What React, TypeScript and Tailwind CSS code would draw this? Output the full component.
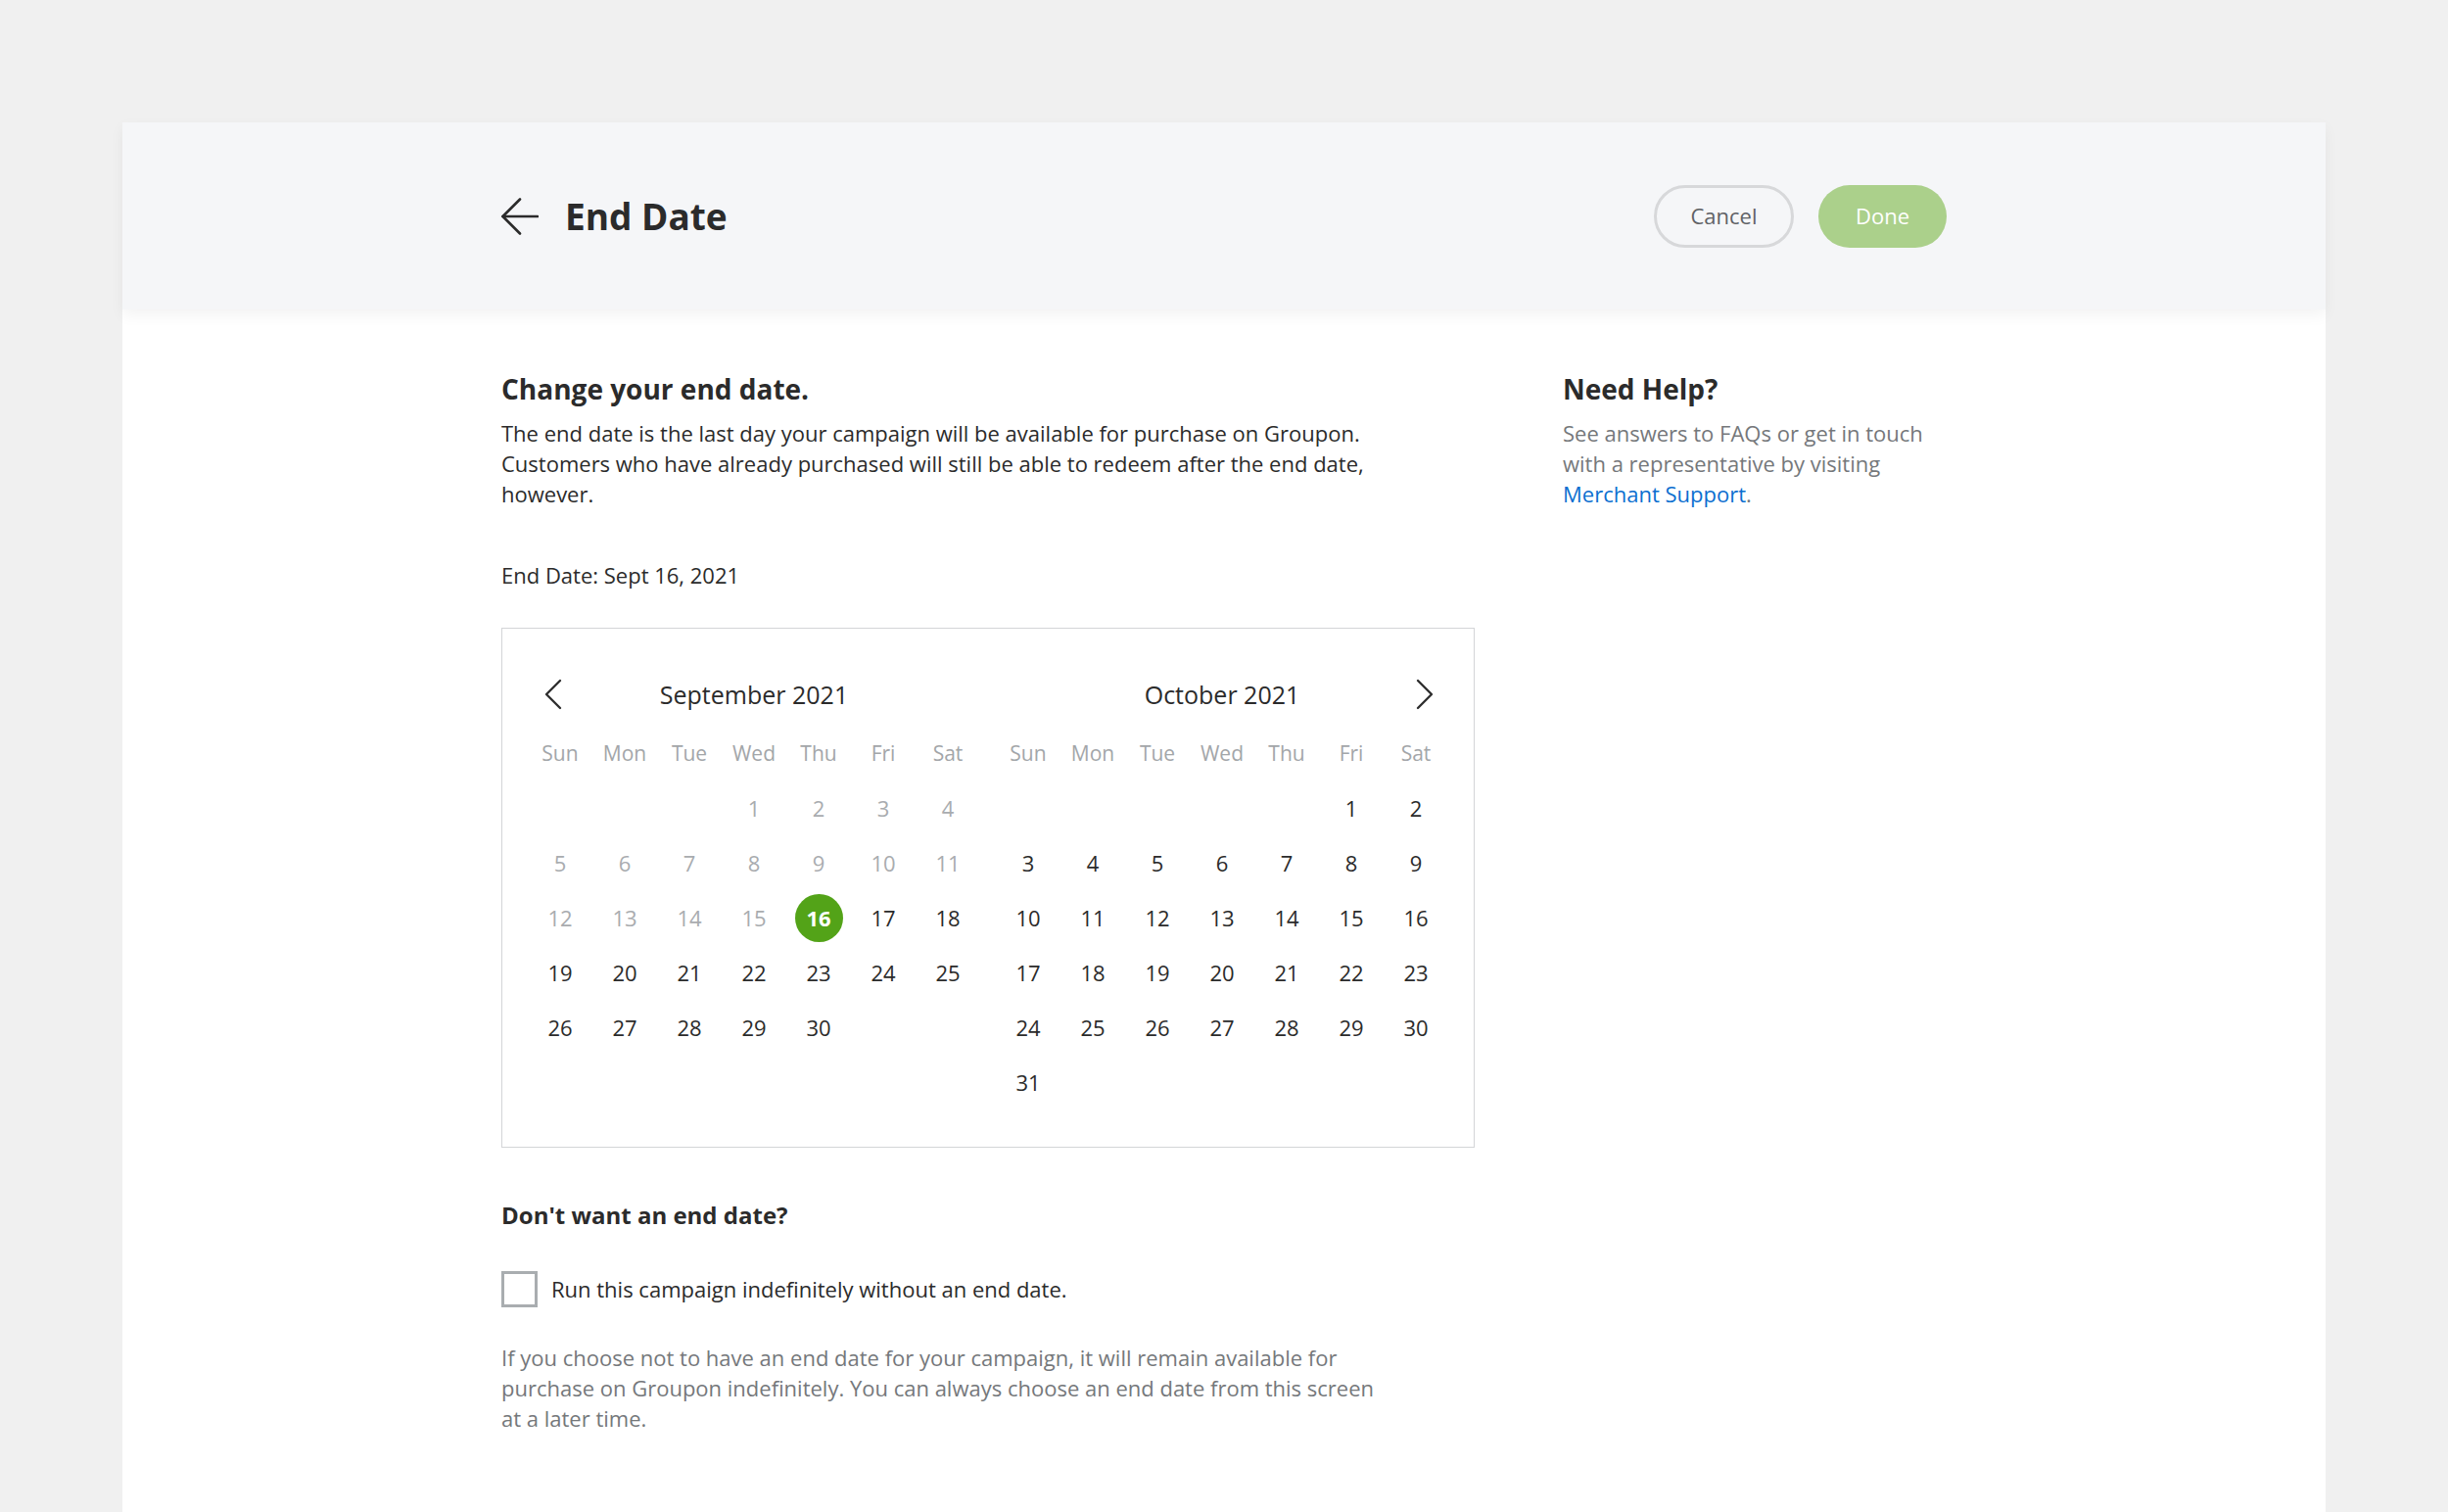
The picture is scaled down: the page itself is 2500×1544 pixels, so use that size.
const font = { fontFamily: '"Open Sans", "Noto Sans", sans-serif' };

const weekdays = ["Sun", "Mon", "Tue", "Wed", "Thu", "Fri", "Sat"];

type Day = { n: number; past?: boolean; selected?: boolean };

function buildMonth(offset: number, days: number, pastUntil: number, selected: number): (Day | null)[] {
  const cells: (Day | null)[] = [];
  for (let i = 0; i < offset; i++) cells.push(null);
  for (let d = 1; d <= days; d++) {
    cells.push({ n: d, past: d < pastUntil, selected: d === selected });
  }
  return cells;
}

function Chevron({ dir }: { dir: "left" | "right" }) {
  return (
    <svg width="20" height="32" viewBox="0 0 20 32" fill="none" stroke="#2f2f2f" strokeWidth="2.4" strokeLinecap="round" strokeLinejoin="round">
      {dir === "left" ? <path d="M17 2 L3 16 L17 30" /> : <path d="M3 2 L17 16 L3 30" />}
    </svg>
  );
}

function Month({ title, cells, nav }: { title: string; cells: (Day | null)[]; nav: "left" | "right" }) {
  return (
    <div className="w-[462px]">
      <div className="relative h-[36px] flex items-center justify-center">
        {nav === "left" && (
          <button className="absolute left-[16px] top-[2px] flex items-center">
            <Chevron dir="left" />
          </button>
        )}
        <span className="text-[25px] leading-[36px] text-[#2b2b2b]">{title}</span>
        {nav === "right" && (
          <button className="absolute right-[14px] top-[2px] flex items-center">
            <Chevron dir="right" />
          </button>
        )}
      </div>
      <div className="grid grid-cols-7 mt-[15px]">
        {weekdays.map((w) => (
          <div key={w} className="h-[55px] flex items-center justify-center text-[21px] text-[#a3a6a9]">
            {w}
          </div>
        ))}
        {cells.map((c, i) => (
          <div key={i} className="h-[56px] flex items-center justify-center">
            {c &&
              (c.selected ? (
                <span className="w-[49px] h-[49px] rounded-full bg-[#53a318] text-white font-bold text-[22px] flex items-center justify-center">
                  {c.n}
                </span>
              ) : (
                <span className={c.past ? "text-[22px] text-[#a9acaf]" : "text-[22px] text-[#2b2b2b]"}>{c.n}</span>
              ))}
          </div>
        ))}
      </div>
    </div>
  );
}

export default function App() {
  const sept = buildMonth(3, 30, 16, 16);
  const oct = buildMonth(5, 31, 0, -1);

  return (
    <div className="min-h-screen bg-[#f0f0f0] pt-[125px] px-[125px]" style={font}>
      <div className="bg-white min-h-[1419px]">
        {/* Header */}
        <header className="relative z-10 h-[191px] bg-[#f5f6f8] shadow-[0_6px_14px_rgba(0,0,0,0.05)]">
          <div className="mx-auto w-[1476px] h-full flex items-center justify-between">
            <div className="flex items-center gap-[27px]">
              <svg width="38" height="38" viewBox="0 0 38 38" fill="none" stroke="#2b2b2b" strokeWidth="2.6" strokeLinecap="round" strokeLinejoin="round">
                <path d="M37 19 H1.5" />
                <path d="M19 1.5 L1.5 19 L19 36.5" />
              </svg>
              <h1 className="text-[37px] font-bold text-[#2b2b2b] leading-none">End Date</h1>
            </div>
            <div className="flex items-center gap-[25px]">
              <button className="w-[143px] h-[64px] rounded-full border-[3px] border-[#d7d8da] text-[22px] text-[#606266]">
                Cancel
              </button>
              <button className="w-[131px] h-[64px] rounded-full bg-[#abd08b] text-[22px] text-white">
                Done
              </button>
            </div>
          </div>
        </header>

        {/* Body */}
        <main className="mx-auto w-[1476px] flex pt-[63px] pb-[80px]">
          <section className="w-[994px]">
            <h2 className="text-[28px] leading-[36px] font-bold text-[#2b2b2b]">Change your end date.</h2>
            <p className="mt-[12px] max-w-[900px] text-[22px] leading-[31px] text-[#2b2b2b]">
              The end date is the last day your campaign will be available for purchase on Groupon. Customers who have already purchased will still be able to redeem after the end date, however.
            </p>
            <p className="mt-[52px] text-[22px] leading-[31px] text-[#2b2b2b]">End Date: Sept 16, 2021</p>

            <div className="mt-[38px] border border-[#d3d5d7] pt-[49px] pb-[38px] px-[26px] flex gap-[16px]">
              <Month title="September 2021" cells={sept} nav="left" />
              <Month title="October 2021" cells={oct} nav="right" />
            </div>

            <h3 className="mt-[53px] text-[24px] leading-[31px] font-bold text-[#2b2b2b]">Don't want an end date?</h3>
            <label className="mt-[42px] flex items-center gap-[14px]">
              <span className="w-[37px] h-[37px] border-[3px] border-[#a9adb0] bg-white shrink-0" />
              <span className="text-[22px] leading-[31px] text-[#2b2b2b]">Run this campaign indefinitely without an end date.</span>
            </label>
            <p className="mt-[36px] max-w-[900px] text-[22px] leading-[31px] text-[#75787b]">
              If you choose not to have an end date for your campaign, it will remain available for purchase on Groupon indefinitely. You can always choose an end date from this screen at a later time.
            </p>
          </section>

          <aside className="ml-[90px] w-[392px]">
            <h2 className="text-[28px] leading-[36px] font-bold text-[#2b2b2b]">Need Help?</h2>
            <p className="mt-[12px] text-[22px] leading-[31px] text-[#75787b]">
              See answers to FAQs or get in touch with a representative by visiting{" "}
              <a className="text-[#0b6fd0]">Merchant Support</a>.
            </p>
          </aside>
        </main>
      </div>
    </div>
  );
}
